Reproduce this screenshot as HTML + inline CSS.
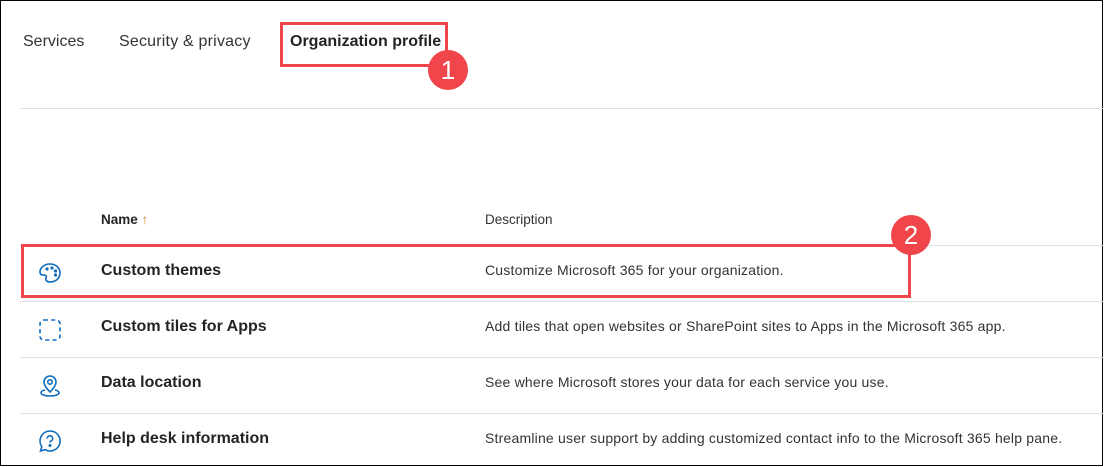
<!DOCTYPE html>
<html><head><style>
html,body{margin:0;padding:0}
body{width:1104px;height:467px;position:relative;overflow:hidden;background:#fff;font-family:"Liberation Sans",sans-serif;color:#242424}
.frame{position:absolute;left:0;top:0;width:1101px;height:464px;border:1.5px solid #000;box-sizing:content-box}
.t{position:absolute;white-space:nowrap}
.tab{font-size:16px;top:33px;color:#333}
.line{position:absolute;left:20px;right:0;height:1px;background:#e1e1e1}
.name{left:101px;font-size:16px;font-weight:bold;color:#242424}
.desc{left:485px;font-size:14px;letter-spacing:0.2px;color:#333}
.red{position:absolute;border:3px solid #f0454a;box-sizing:border-box}
.badge{position:absolute;width:40px;height:40px;border-radius:50%;background:#f0454a;color:#fff;font-size:26px;text-align:center;line-height:40px}
svg{position:absolute}
</style></head><body>
<div class="frame"></div>
<div class="t tab" style="left:23px">Services</div>
<div class="t tab" style="left:119px;letter-spacing:0.2px">Security &amp; privacy</div>
<div class="t tab" style="left:290px;font-weight:bold;color:#242424">Organization profile</div>
<div class="line" style="top:108px"></div>
<div class="t" style="left:101px;top:212px;font-size:13.5px;font-weight:bold">Name <span style="color:#d68a3a;font-weight:normal">↑</span></div>
<div class="t" style="left:485px;top:212px;font-size:13.5px;color:#333">Description</div>
<div class="line" style="top:245px"></div>
<div class="line" style="top:301px"></div>
<div class="line" style="top:357px"></div>
<div class="line" style="top:413px"></div>
<div class="t name" style="top:262px">Custom themes</div>
<div class="t desc" style="top:262px">Customize Microsoft 365 for your organization.</div>
<div class="t name" style="top:318px">Custom tiles for Apps</div>
<div class="t desc" style="top:318px">Add tiles that open websites or SharePoint sites to Apps in the Microsoft 365 app.</div>
<div class="t name" style="top:374px">Data location</div>
<div class="t desc" style="top:374px">See where Microsoft stores your data for each service you use.</div>
<div class="t name" style="top:430px">Help desk information</div>
<div class="t desc" style="top:430px">Streamline user support by adding customized contact info to the Microsoft 365 help pane.</div>
<svg style="left:38px;top:262px" width="24" height="22" viewBox="0 0 24 22" fill="none" stroke="#0f6cbd" stroke-width="1.6"><path d="M12 2C6 2 2 6 2 10c0 3 2 3 4 3s3 1 2 3c-1 2 1 4 4 4 6 0 10-4 10-9S18 2 12 2z"/><circle cx="9" cy="7" r=".8" fill="#0f6cbd"/><circle cx="14" cy="6" r=".8" fill="#0f6cbd"/><circle cx="17.5" cy="9" r=".8" fill="#0f6cbd"/><circle cx="17.5" cy="13" r=".8" fill="#0f6cbd"/></svg>
<svg style="left:38px;top:318px" width="24" height="24" viewBox="0 0 24 24" fill="none" stroke="#0f6cbd" stroke-width="1.6" stroke-dasharray="4 3.2"><rect x="2" y="2" width="20" height="20" rx="4"/></svg>
<svg style="left:38px;top:373px" width="24" height="26" viewBox="0 0 24 26" fill="none" stroke="#0f6cbd" stroke-width="1.6"><path d="M12 19c-4-4-6-7-6-10a6 6 0 0 1 12 0c0 3-2 6-6 10z"/><circle cx="12" cy="9" r="2.2"/><path d="M7 17c-3 .7-4 1.7-4 2.8C3 21.6 7 23 12 23s9-1.4 9-3.2c0-1.1-1-2.1-4-2.8"/></svg>
<svg style="left:38px;top:429px" width="24" height="25" viewBox="0 0 24 25" fill="none" stroke="#0f6cbd" stroke-width="1.6"><path d="M12 2a10 10 0 1 1-5 18.6L2.5 22l1.3-4.3A10 10 0 0 1 12 2z"/><path d="M9.3 9.5a2.7 2.7 0 1 1 3.8 2.4c-.8.4-1.1.9-1.1 1.7"/><circle cx="12" cy="16.5" r=".7" fill="#0f6cbd"/></svg>
<div class="red" style="left:280px;top:22px;width:168px;height:45px"></div>
<div class="badge" style="left:428px;top:50px">1</div>
<div class="red" style="left:21px;top:244px;width:890px;height:54px"></div>
<div class="badge" style="left:891px;top:215px">2</div>
</body></html>
